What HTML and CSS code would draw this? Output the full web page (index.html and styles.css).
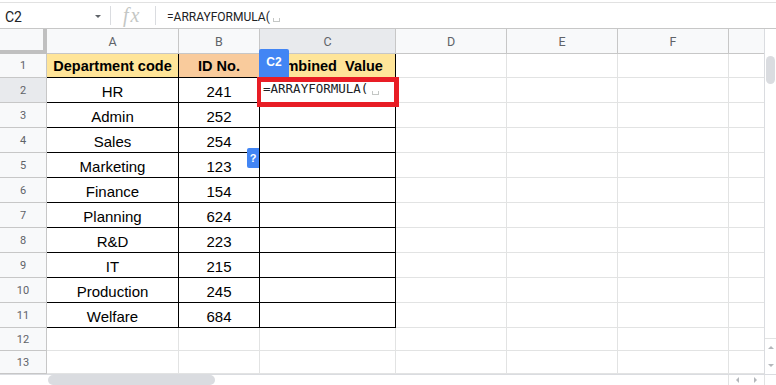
FILE: index.html
```html
<!DOCTYPE html>
<html lang="en">
<head>
    <title>Sheet - ARRAYFORMULA</title>
    <meta charset="UTF-8">
    <meta name="viewport" content="width=device-width, initial-scale=1.0">
    <link rel="stylesheet" href="styles.css">
</head>

<body>
    <div class="formula-bar">
        <div class="name-box">
            <span class="cell-ref">C2</span>
            <span class="caret"></span>
        </div>
        <div class="sep"></div>
        <div class="fx">fx</div>
        <div class="sep"></div>
        <div class="formula-text">=ARRAYFORMULA(<span class="ph"></span></div>
    </div>

    <div class="sheet">
        <div class="grid">
            <div class="row head">
                <div class="corner"></div>
                <div class="ch">A</div>
                <div class="ch">B</div>
                <div class="ch selected">C</div>
                <div class="ch">D</div>
                <div class="ch">E</div>
                <div class="ch">F</div>
                <div class="ch"></div>
            </div>
            <div class="row r1">
                <div class="rh">1</div>
                <div class="c t hd yel">Department code</div>
                <div class="c t hd org">ID No.</div>
                <div class="c t hd yel wide">Combined  Value</div>
                <div class="c"></div><div class="c"></div><div class="c"></div><div class="c"></div>
            </div>
            <div class="row">
                <div class="rh selected">2</div>
                <div class="c t">HR</div>
                <div class="c t">241</div>
                <div class="c t"></div>
                <div class="c"></div><div class="c"></div><div class="c"></div><div class="c"></div>
            </div>
            <div class="row">
                <div class="rh">3</div>
                <div class="c t">Admin</div>
                <div class="c t">252</div>
                <div class="c t"></div>
                <div class="c"></div><div class="c"></div><div class="c"></div><div class="c"></div>
            </div>
            <div class="row">
                <div class="rh">4</div>
                <div class="c t">Sales</div>
                <div class="c t">254</div>
                <div class="c t"></div>
                <div class="c"></div><div class="c"></div><div class="c"></div><div class="c"></div>
            </div>
            <div class="row">
                <div class="rh">5</div>
                <div class="c t">Marketing</div>
                <div class="c t">123</div>
                <div class="c t"></div>
                <div class="c"></div><div class="c"></div><div class="c"></div><div class="c"></div>
            </div>
            <div class="row">
                <div class="rh">6</div>
                <div class="c t">Finance</div>
                <div class="c t">154</div>
                <div class="c t"></div>
                <div class="c"></div><div class="c"></div><div class="c"></div><div class="c"></div>
            </div>
            <div class="row">
                <div class="rh">7</div>
                <div class="c t">Planning</div>
                <div class="c t">624</div>
                <div class="c t"></div>
                <div class="c"></div><div class="c"></div><div class="c"></div><div class="c"></div>
            </div>
            <div class="row">
                <div class="rh">8</div>
                <div class="c t">R&amp;D</div>
                <div class="c t">223</div>
                <div class="c t"></div>
                <div class="c"></div><div class="c"></div><div class="c"></div><div class="c"></div>
            </div>
            <div class="row">
                <div class="rh">9</div>
                <div class="c t">IT</div>
                <div class="c t">215</div>
                <div class="c t"></div>
                <div class="c"></div><div class="c"></div><div class="c"></div><div class="c"></div>
            </div>
            <div class="row">
                <div class="rh">10</div>
                <div class="c t">Production</div>
                <div class="c t">245</div>
                <div class="c t"></div>
                <div class="c"></div><div class="c"></div><div class="c"></div><div class="c"></div>
            </div>
            <div class="row">
                <div class="rh">11</div>
                <div class="c t">Welfare</div>
                <div class="c t">684</div>
                <div class="c t"></div>
                <div class="c"></div><div class="c"></div><div class="c"></div><div class="c"></div>
            </div>
            <div class="row short">
                <div class="rh">12</div>
                <div class="c"></div><div class="c"></div><div class="c"></div>
                <div class="c"></div><div class="c"></div><div class="c"></div><div class="c"></div>
            </div>
            <div class="row short">
                <div class="rh">13</div>
                <div class="c"></div><div class="c"></div><div class="c"></div>
                <div class="c"></div><div class="c"></div><div class="c"></div><div class="c"></div>
            </div>

            <!-- floating bits over the grid -->
            <div class="ref-badge">C2</div>
            <div class="cell-editor">=ARRAYFORMULA(<span class="ph"></span></div>
            <div class="help-badge">?</div>
        </div>

        <div class="vscroll">
            <div class="v-thumb"></div>
            <div class="v-arrows">
                <span class="arrow up"></span>
                <span class="arrow down"></span>
            </div>
        </div>
    </div>

    <div class="hscroll">
        <div class="h-thumb"></div>
        <div class="h-arrows">
            <span class="arrow left"></span>
            <span class="arrow right"></span>
        </div>
    </div>
</body>

</html>
```

FILE: styles.css
```css
body {
    margin: 0;
    width: 776px;
    height: 385px;
    overflow: hidden;
    background-color: #ffffff;
    font-family: Roboto, 'Liberation Sans', Arial, sans-serif;
    color: #202124;
}

/* formula bar */

.formula-bar {
    margin-top: 2px;
    height: 25px;
    border-top: 1px solid #e1e1e1;
    border-bottom: 1px solid #c7c7c7;
    display: flex;
    align-items: center;
}

.name-box {
    width: 110px;
    height: 100%;
    box-sizing: border-box;
    padding-left: 5px;
    padding-top: 2px;
    display: flex;
    align-items: center;
}

.cell-ref {
    font-size: 14px;
    color: #202124;
}

.caret {
    margin-left: auto;
    margin-right: 9px;
    width: 0;
    height: 0;
    border-left: 3px solid transparent;
    border-right: 3px solid transparent;
    border-top: 3px solid #5f6368;
}

.sep {
    width: 1px;
    height: 19px;
    background-color: #dadce0;
}

.fx {
    width: 44px;
    box-sizing: border-box;
    padding-left: 12px;
    font-family: 'Liberation Serif', serif;
    font-style: italic;
    font-size: 20px;
    letter-spacing: 2px;
    color: #c4c7c5;
    line-height: 25px;
}

.formula-text {
    padding-left: 11px;
    padding-top: 2px;
    font-size: 12px;
    color: #202124;
    display: flex;
    align-items: center;
}

.ph {
    display: inline-block;
    width: 5px;
    height: 3px;
    margin-left: 3px;
    margin-top: 7px;
    border: 1px solid #c4c7c5;
    border-top: none;
}

/* grid */

.sheet {
    display: flex;
    height: 345px;
}

.grid {
    width: 764px;
    position: relative;
}

.row {
    display: grid;
    grid-template-columns: 47px 132px 81px 136px 111px 111px 111px 35px;
    height: 25px;
}

.row.r1 {
    height: 24px;
}

.row.short {
    height: 23px;
}

.row > div {
    box-sizing: border-box;
    border-right: 1px solid #e2e3e3;
    border-bottom: 1px solid #e2e3e3;
}

.row > div:last-child {
    border-right: none;
}

.corner {
    background-color: #f8f9fa;
    border-right: 4px solid #c0c0c0 !important;
    border-bottom: 4px solid #c0c0c0 !important;
}

.ch {
    background-color: #f8f9fa;
    border-color: #c7c7c7 !important;
    display: flex;
    align-items: center;
    justify-content: center;
    font-size: 12.5px;
    color: #5f6368;
}

.rh {
    background-color: #f8f9fa;
    border-color: #c7c7c7 !important;
    display: flex;
    align-items: center;
    justify-content: center;
    font-size: 11px;
    color: #5f6368;
}

.ch.selected,
.rh.selected {
    background-color: #e8eaed;
}

.c {
    display: flex;
    align-items: flex-end;
    justify-content: center;
    padding-bottom: 2px;
    font-family: 'Liberation Sans', Arial, sans-serif;
    font-size: 15px;
    line-height: 17px;
    color: #000000;
    white-space: pre;
}

.c.t {
    border-right-color: #000000;
    border-bottom-color: #000000;
}

.hd {
    font-weight: bold;
    font-size: 14.5px;
}

.hd.wide {
    padding-right: 6px;
}

.yel {
    background-color: #ffe599;
}

.org {
    background-color: #f9cb9c;
}

/* overlays */

.ref-badge {
    position: absolute;
    left: 259px;
    top: 20px;
    width: 30px;
    height: 28px;
    background-color: #4285f4;
    border-radius: 2px 2px 0 0;
    color: #ffffff;
    font-family: 'Liberation Sans', Arial, sans-serif;
    font-weight: bold;
    font-size: 12px;
    display: flex;
    align-items: center;
    justify-content: center;
    padding-bottom: 2px;
    box-sizing: border-box;
}

.cell-editor {
    position: absolute;
    left: 257px;
    top: 48px;
    width: 142px;
    height: 30px;
    box-sizing: border-box;
    border-style: solid;
    border-color: #e81d25;
    border-width: 5px 5px 5px 4px;
    background-color: #ffffff;
    padding-left: 2px;
    font-family: 'DejaVu Sans Mono', 'Liberation Mono', monospace;
    font-size: 12.5px;
    line-height: 13px;
    color: #202124;
    white-space: nowrap;
}

.cell-editor .ph {
    margin-left: 4px;
    margin-top: 0;
    vertical-align: -2px;
}

.help-badge {
    position: absolute;
    left: 247px;
    top: 119px;
    width: 12px;
    height: 20px;
    background-color: #4285f4;
    border-radius: 2px 0 0 2px;
    color: #ffffff;
    font-family: 'Liberation Sans', Arial, sans-serif;
    font-weight: bold;
    font-size: 11px;
    display: flex;
    align-items: center;
    justify-content: center;
}

/* scrollbars */

.vscroll {
    width: 12px;
    box-sizing: border-box;
    border-left: 1px solid #dadce0;
    display: flex;
    flex-direction: column;
}

.v-thumb {
    margin: 27px 0 0 1px;
    width: 9px;
    height: 28px;
    border-radius: 5px;
    background-color: #dadce0;
}

.v-arrows {
    margin-top: auto;
    height: 35px;
    border-top: 1px solid #e2e3e3;
    display: flex;
    flex-direction: column;
    align-items: center;
    justify-content: space-around;
}

.hscroll {
    height: 10px;
    border-top: 1px solid #dadce0;
    display: flex;
    align-items: center;
}

.h-thumb {
    margin-left: 48px;
    width: 167px;
    height: 10px;
    border-radius: 5px;
    background-color: #dadce0;
}

.h-arrows {
    margin-left: auto;
    margin-right: 11px;
    width: 35px;
    height: 100%;
    border-left: 1px solid #e2e3e3;
    border-right: 1px solid #e2e3e3;
    display: flex;
    align-items: center;
    justify-content: space-around;
}

.arrow {
    width: 0;
    height: 0;
}

.arrow.up {
    border-left: 3px solid transparent;
    border-right: 3px solid transparent;
    border-bottom: 3px solid #b4b7bb;
}

.arrow.down {
    border-left: 3px solid transparent;
    border-right: 3px solid transparent;
    border-top: 3px solid #b4b7bb;
}

.arrow.left {
    border-top: 3px solid transparent;
    border-bottom: 3px solid transparent;
    border-right: 3px solid #b4b7bb;
}

.arrow.right {
    border-top: 3px solid transparent;
    border-bottom: 3px solid transparent;
    border-left: 3px solid #b4b7bb;
}
```
